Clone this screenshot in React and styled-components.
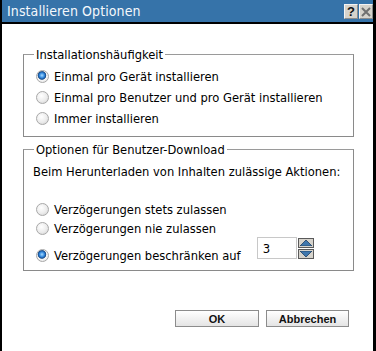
import React from 'react';
import styled, { createGlobalStyle } from 'styled-components';

const GlobalStyle = createGlobalStyle`
  html, body { margin: 0; padding: 0; background: #fff; }
  body { font-family: "DejaVu Sans Condensed", "DejaVu Sans", sans-serif; }
`;

const Window = styled.div`
  box-sizing: border-box;
  width: 376px;
  height: 351px;
  border-left: 2px solid #000;
  border-right: 3px solid #000;
  background: #fff;
  display: flex;
  flex-direction: column;
`;

const TitleBar = styled.div`
  height: 22px;
  background: #3673a9;
  border-bottom: 2px solid #000;
  display: flex;
  align-items: center;
  justify-content: space-between;
  padding-left: 5px;
`;

const Title = styled.span`
  color: #f4f8fc;
  font-size: 14px;
  letter-spacing: 0.1px;
`;

const TitleButtons = styled.div`
  display: flex;
  gap: 1px;
  align-self: flex-start;
  margin-top: 4px;
`;

const TitleButton = styled.div`
  box-sizing: border-box;
  width: 14px;
  height: 15px;
  background: #d6d3cc;
  border: 1px solid #f4f4f4;
  border-right-color: #8c8c8c;
  border-bottom-color: #8c8c8c;
  display: flex;
  align-items: center;
  justify-content: center;
  font: bold 13px "Liberation Sans", sans-serif;
  color: #111;
`;

const Body = styled.div`
  flex: 1;
  display: flex;
  flex-direction: column;
  padding: 23px 19px 0 21px;
  color: #000;
  font-size: 12.8px;
`;

const Group = styled.fieldset`
  margin: 0 0 ${p => p.$gap || 0}px 0;
  padding: ${p => p.$pad || '4px 10px 7px'};
  border: 1px solid #8a8a8a;
  border-top-color: #9a9a9a;
`;

const Legend = styled.legend`
  padding: 0 2px;
  line-height: 15px;
`;

const Row = styled.label`
  display: flex;
  align-items: center;
  gap: 5px;
  height: ${p => p.$h || 21}px;
  margin-left: 2px;
`;

const Radio = styled.span`
  box-sizing: border-box;
  width: 13px;
  height: 13px;
  border-radius: 50%;
  flex: none;
  border: 1px solid #a8a8a8;
  background: ${p =>
    p.$checked
      ? 'radial-gradient(circle at 45% 40%, #a8dcff 0, #2f86dd 28%, #1a4f8f 42%, #5c7fa6 47%, #f6f6f6 52%, #dedede 100%)'
      : 'radial-gradient(circle at 40% 35%, #ffffff 0, #ececec 55%, #cdcdcd 100%)'};
`;

const Description = styled.div`
  margin-left: -1px;
  line-height: 15px;
  margin-bottom: 20px;
`;

const SpinRow = styled.div`
  display: flex;
  align-items: flex-end;
  gap: 16px;
  height: 28px;
`;

const Spinner = styled.div`
  display: flex;
  gap: 1px;
  align-self: flex-start;
`;

const SpinInput = styled.div`
  box-sizing: border-box;
  width: 40px;
  height: 22px;
  border: 1px solid #c8c8c8;
  padding: 3px 0 0 5px;
  font-size: 13px;
`;

const SpinButtons = styled.div`
  display: flex;
  flex-direction: column;
  gap: 1px;
  margin-top: 1px;
`;

const SpinButton = styled.div`
  box-sizing: border-box;
  width: 16px;
  height: 10px;
  background: #d6d3cc;
  border: 1px solid #5a5a5a;
  display: flex;
  align-items: center;
  justify-content: center;
`;

const Footer = styled.div`
  display: flex;
  justify-content: flex-end;
  gap: 7px;
  margin-top: 39px;
  padding-right: 5px;
`;

const Button = styled.button`
  box-sizing: border-box;
  width: ${p => p.$w}px;
  height: 17px;
  padding: 0;
  border: 1px solid #8c8c8c;
  background: linear-gradient(#ffffff, #e4e4e4);
  font: bold 11px "Liberation Sans", Arial, sans-serif;
  color: #111;
`;

const Arrow = ({ up }) => (
  <svg width="12" height="6" viewBox="0 0 12 6">
    <polygon
      points={up ? '6,0 12,6 0,6' : '0,0 12,0 6,6'}
      fill="#3f77ad"
      stroke="#1e3f62"
      strokeWidth="0.8"
    />
  </svg>
);

const CloseIcon = () => (
  <svg width="10" height="10" viewBox="0 0 10 10">
    <path d="M1 1 L9 9 M9 1 L1 9" stroke="#707070" strokeWidth="2" />
  </svg>
);

export default function App() {
  return (
    <>
      <GlobalStyle />
      <Window>
        <TitleBar>
          <Title>Installieren Optionen</Title>
          <TitleButtons>
            <TitleButton>?</TitleButton>
            <TitleButton><CloseIcon /></TitleButton>
          </TitleButtons>
        </TitleBar>
        <Body>
          <Group $gap={5}>
            <Legend>Installationshäufigkeit</Legend>
            <Row><Radio $checked />Einmal pro Gerät installieren</Row>
            <Row><Radio />Einmal pro Benutzer und pro Gerät installieren</Row>
            <Row><Radio />Immer installieren</Row>
          </Group>
          <Group $pad="7px 10px 5px">
            <Legend>Optionen für Benutzer-Download</Legend>
            <Description>Beim Herunterladen von Inhalten zulässige Aktionen:</Description>
            <Row $h={20}><Radio />Verzögerungen stets zulassen</Row>
            <Row $h={18}><Radio />Verzögerungen nie zulassen</Row>
            <SpinRow>
              <Row $h={20}><Radio $checked />Verzögerungen beschränken auf</Row>
              <Spinner>
                <SpinInput>3</SpinInput>
                <SpinButtons>
                  <SpinButton><Arrow up /></SpinButton>
                  <SpinButton><Arrow /></SpinButton>
                </SpinButtons>
              </Spinner>
            </SpinRow>
          </Group>
          <Footer>
            <Button $w={84}>OK</Button>
            <Button $w={83}>Abbrechen</Button>
          </Footer>
        </Body>
      </Window>
    </>
  );
}
